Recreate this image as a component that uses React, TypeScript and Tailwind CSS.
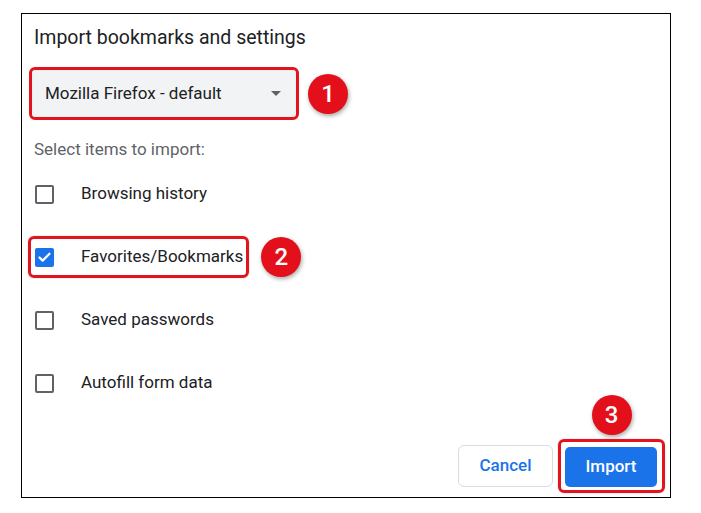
import { Check } from "lucide-react";

const items = [
  { label: "Browsing history", checked: false, marked: false },
  { label: "Favorites/Bookmarks", checked: true, marked: true },
  { label: "Saved passwords", checked: false, marked: false },
  { label: "Autofill form data", checked: false, marked: false },
];

function Badge({ n }: { n: number }) {
  return (
    <div className="flex h-[40px] w-[40px] shrink-0 items-center justify-center rounded-full bg-[#e3101b] text-[24px] font-medium leading-none text-white shadow-[1px_2px_4px_rgba(0,0,0,0.35)]">
      {n}
    </div>
  );
}

export default function App() {
  return (
    <div className="h-[513px] w-[701px] bg-white pl-[21px] pt-[13px] font-['Roboto','Liberation_Sans',sans-serif]">
      <div className="flex h-[485px] w-[650px] flex-col border border-black">
        <h1 className="ml-[12px] mt-[12px] text-[19.5px] leading-[24px] text-[#202124]">
          Import bookmarks and settings
        </h1>

        <div className="ml-[7px] mt-[17px] flex items-center gap-[9px]">
          <div className="rounded-[6px] border-[3px] border-[#e3141e] p-px">
            <div className="flex h-[45px] w-[262px] items-center justify-between rounded-[4px] bg-[#f1f3f4] pl-[12px] pr-[14px] shadow-[0_0_2px_rgba(0,0,0,0.25)]">
              <span className="text-[17px] text-[#202124]">
                Mozilla Firefox - default
              </span>
              <span className="h-0 w-0 border-x-[5px] border-t-[5px] border-x-transparent border-t-[#5f6368]" />
            </div>
          </div>
          <Badge n={1} />
        </div>

        <p className="ml-[12px] mt-[18px] text-[17px] leading-[22px] text-[#5f6368]">
          Select items to import:
        </p>

        <div className="ml-[6px] mt-[13px] flex flex-col gap-[21px]">
          {items.map((item) => (
            <div key={item.label} className="flex items-center gap-[12px]">
              <div
                className={
                  item.marked
                    ? "flex h-[42px] items-center rounded-[6px] border-[3px] border-[#e3141e] pl-[4px] pr-[3px] shadow-[0_0_2px_rgba(0,0,0,0.2)]"
                    : "flex h-[42px] items-center border-[3px] border-transparent pl-[4px] pr-[3px]"
                }
              >
                {item.checked ? (
                  <span className="flex h-[19px] w-[19px] items-center justify-center rounded-[2px] bg-[#1a73e8]">
                    <Check className="h-[15px] w-[15px] text-white" strokeWidth={3.5} />
                  </span>
                ) : (
                  <span className="h-[19px] w-[19px] rounded-[2px] border-2 border-[#5f6368]" />
                )}
                <span className="ml-[27px] text-[17px] text-[#202124]">
                  {item.label}
                </span>
              </div>
              {item.marked && <Badge n={2} />}
            </div>
          ))}
        </div>

        <div className="mb-[4px] mr-[5px] mt-auto flex items-center justify-end gap-[5px]">
          <button className="h-[42px] w-[95px] rounded-[6px] border border-[#dadce0] bg-white text-[17px] font-medium text-[#1a73e8]">
            Cancel
          </button>
          <div className="relative rounded-[6px] border-[3px] border-[#e3141e] pb-[3px] pl-[4px] pr-[5px] pt-[5px] shadow-[0_0_2px_rgba(0,0,0,0.2)]">
            <div className="absolute bottom-full left-1/2 mb-[7px] -translate-x-1/2">
              <Badge n={3} />
            </div>
            <button className="h-[40px] w-[92px] rounded-[5px] bg-[#1a73e8] text-[17px] font-medium text-white">
              Import
            </button>
          </div>
        </div>
      </div>
    </div>
  );
}
